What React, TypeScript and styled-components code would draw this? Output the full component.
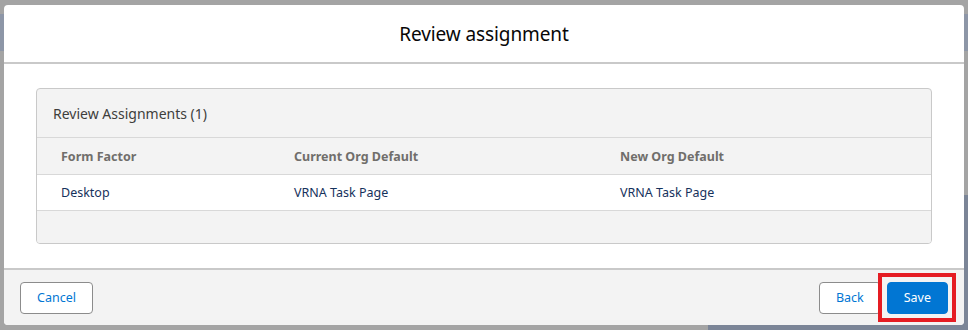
import React from 'react';
import styled, { createGlobalStyle } from 'styled-components';

const GlobalStyle = createGlobalStyle`
  html, body {
    margin: 0;
    padding: 0;
  }
  body {
    width: 968px;
    height: 330px;
    overflow: hidden;
    font-family: 'Noto Sans', 'Open Sans', Arial, sans-serif;
    background:
      linear-gradient(#8d96a7, #8d96a7) 0 14px / 100% 37px no-repeat,
      linear-gradient(#7b8597, #7b8597) 708px 195px / 260px 135px no-repeat,
      #a4a4a4;
  }
`;

const Backdrop = styled.div`
  padding: 5px 4px 0 4px;
`;

const Modal = styled.div`
  width: 960px;
  height: 320px;
  display: flex;
  flex-direction: column;
  background: #ffffff;
  border-radius: 4px;
  overflow: hidden;
`;

const Header = styled.header`
  height: 57px;
  display: flex;
  align-items: center;
  justify-content: center;
  border-bottom: 2px solid #c9c9c9;
`;

const Title = styled.h2`
  margin: 0;
  font-size: 19px;
  font-weight: 400;
  color: #080707;
  letter-spacing: -0.1px;
`;

const Body = styled.div`
  flex: 1;
  padding: 24px 32px 24px 32px;
`;

const Card = styled.div`
  background: #f3f3f3;
  border: 1px solid #c9c9c9;
  border-radius: 4px;
  overflow: hidden;
`;

const CardHeader = styled.div`
  height: 48px;
  display: flex;
  align-items: center;
  padding-left: 16px;
  font-size: 14px;
  color: #3e3e3c;
  border-bottom: 1px solid #d8d8d8;
`;

const Row = styled.div<{ $head?: boolean; $empty?: boolean }>`
  display: grid;
  grid-template-columns: 233px 326px 1fr;
  align-items: center;
  padding-left: 24px;
  height: ${(p) => (p.$head ? 36 : p.$empty ? 32 : 35)}px;
  background: ${(p) => (p.$head || p.$empty ? '#f3f3f3' : '#ffffff')};
  border-bottom: ${(p) => (p.$empty ? 'none' : '1px solid #d8d8d8')};
`;

const HeadCell = styled.div`
  font-size: 12.5px;
  font-weight: 700;
  color: #706e6b;
`;

const Cell = styled.div`
  font-size: 12.5px;
  color: #16325c;
`;

const Footer = styled.footer`
  height: 55px;
  display: flex;
  align-items: center;
  justify-content: space-between;
  padding: 0 16px;
  background: #f3f3f3;
  border-top: 2px solid #c9c9c9;
`;

const Group = styled.div`
  display: flex;
  align-items: center;
  gap: 6px;
`;

const Button = styled.button<{ $brand?: boolean }>`
  height: 32px;
  padding: 0 16px;
  border-radius: 4px;
  font-family: inherit;
  font-size: 12.5px;
  cursor: pointer;
  border: 1px solid ${(p) => (p.$brand ? '#0176d3' : '#8c8c8c')};
  background: ${(p) => (p.$brand ? '#0176d3' : '#ffffff')};
  color: ${(p) => (p.$brand ? '#ffffff' : '#0176d3')};
`;

const Highlight = styled.span`
  position: relative;
  display: inline-flex;
  &::after {
    content: '';
    position: absolute;
    top: -9px;
    left: -9px;
    right: -8px;
    bottom: -8px;
    border: 4px solid #e51c23;
    pointer-events: none;
  }
`;

const rows = [{ factor: 'Desktop', current: 'VRNA Task Page', next: 'VRNA Task Page' }];

export default function App() {
  return (
    <>
      <GlobalStyle />
      <Backdrop>
        <Modal>
          <Header>
            <Title>Review assignment</Title>
          </Header>
          <Body>
            <Card>
              <CardHeader>Review Assignments ({rows.length})</CardHeader>
              <Row $head>
                <HeadCell>Form Factor</HeadCell>
                <HeadCell>Current Org Default</HeadCell>
                <HeadCell>New Org Default</HeadCell>
              </Row>
              {rows.map((r) => (
                <Row key={r.factor}>
                  <Cell>{r.factor}</Cell>
                  <Cell>{r.current}</Cell>
                  <Cell>{r.next}</Cell>
                </Row>
              ))}
              <Row $empty />
            </Card>
          </Body>
          <Footer>
            <Button>Cancel</Button>
            <Group>
              <Button>Back</Button>
              <Highlight>
                <Button $brand>Save</Button>
              </Highlight>
            </Group>
          </Footer>
        </Modal>
      </Backdrop>
    </>
  );
}
